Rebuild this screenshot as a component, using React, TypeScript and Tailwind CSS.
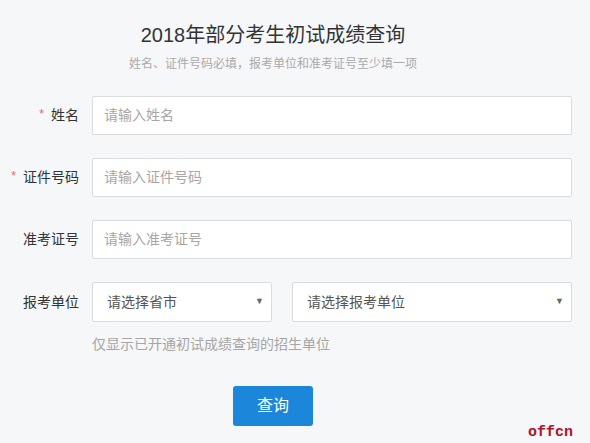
import React from "react";

const font = { fontFamily: '"Liberation Sans", "Noto Sans CJK SC", sans-serif' };

function Label({ text, required }: { text: string; required?: boolean }) {
  return (
    <div className="w-[80px] shrink-0 flex justify-end items-center text-[14px] text-[#333] pr-[1px]">
      {required && <span className="text-[#e57373] mr-[7px] text-[13px] relative top-[-2px]">*</span>}
      <span>{text}</span>
    </div>
  );
}

function Input({ placeholder }: { placeholder: string }) {
  return (
    <div className="w-[480px] h-[39px] bg-white border border-[#dcdcdc] rounded-[2px] flex items-center pl-[11px] text-[14px] text-[#a6a6a6]">
      {placeholder}
    </div>
  );
}

function Select({ text, width }: { text: string; width: string }) {
  return (
    <div className={`${width} h-[40px] bg-white border border-[#dcdcdc] rounded-[2px] flex items-center justify-between pl-[14px] pr-[7px] text-[14px] text-[#555]`}>
      <span>{text}</span>
      <span className="text-[9px] text-[#666]">▼</span>
    </div>
  );
}

export default function App() {
  return (
    <div className="relative w-[590px] h-[443px] bg-[#f6f7f9] overflow-hidden" style={font}>
      <div className="w-[546px] pt-[21px] text-center">
        <div className="text-[20px] leading-[28px] text-[#333]">2018年部分考生初试成绩查询</div>
        <div className="mt-[6px] text-[12px] leading-[18px] text-[#aaa]">
          姓名、证件号码必填，报考单位和准考证号至少填一项
        </div>
      </div>
      <div className="mt-[23px] flex flex-col gap-[23px]">
        <div className="flex gap-[12px]">
          <Label text="姓名" required />
          <Input placeholder="请输入姓名" />
        </div>
        <div className="flex gap-[12px]">
          <Label text="证件号码" required />
          <Input placeholder="请输入证件号码" />
        </div>
        <div className="flex gap-[12px]">
          <Label text="准考证号" />
          <Input placeholder="请输入准考证号" />
        </div>
        <div className="flex gap-[12px]">
          <Label text="报考单位" />
          <div className="flex gap-[20px]">
            <Select text="请选择省市" width="w-[180px]" />
            <Select text="请选择报考单位" width="w-[280px]" />
          </div>
        </div>
      </div>
      <div className="mt-[12px] pl-[92px] text-[14px] leading-[20px] text-[#a6a6a6]">
        仅显示已开通初试成绩查询的招生单位
      </div>
      <div className="w-[546px] mt-[32px] flex justify-center">
        <button className="w-[80px] h-[40px] bg-[#1c86da] rounded-[3px] text-white text-[16px]">查询</button>
      </div>
      <div
        className="absolute left-[528px] top-[423px] text-[15px] font-bold text-[#b3102a] leading-[20px]"
        style={{ fontFamily: '"Liberation Mono", monospace' }}
      >
        offcn
      </div>
    </div>
  );
}
